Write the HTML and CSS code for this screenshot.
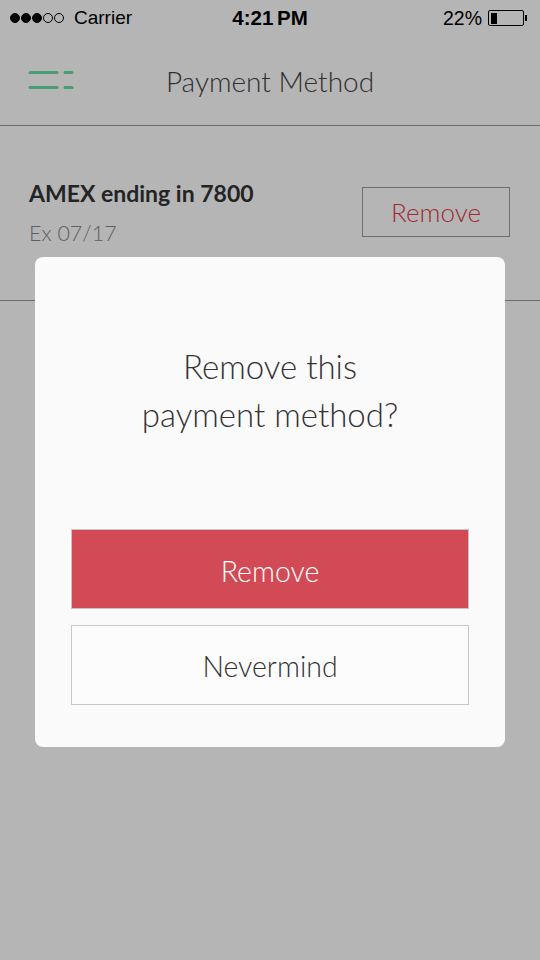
FILE: index.html
```html
<!DOCTYPE html>
<html>
<head>
<meta charset="utf-8">
<link rel="stylesheet" href="styles.css">
</head>
<body>
<div class="screen">
  <div class="status">
    <div class="status-left">
      <span class="signal"><i class="dot on"></i><i class="dot on"></i><i class="dot on"></i><i class="dot"></i><i class="dot"></i></span>
      <span>Carrier</span>
    </div>
    <div class="status-time">4:21<span class="thin"> </span>PM</div>
    <div class="status-right">
      <span>22%</span>
      <span class="battery"><span class="battery-fill"></span></span><span class="battery-nub"></span>
    </div>
  </div>
  <div class="navbar">
    <div class="menu-icon">
      <svg width="46" height="20" viewBox="0 0 46 20">
        <g stroke="#68dca2" stroke-width="3" stroke-linecap="round">
          <line x1="2" y1="2.5" x2="29" y2="2.5"/>
          <line x1="37" y1="2.5" x2="44" y2="2.5"/>
          <line x1="2" y1="17.5" x2="29" y2="17.5"/>
          <line x1="37" y1="17.5" x2="44" y2="17.5"/>
        </g>
      </svg>
    </div>
    <div class="nav-title">Payment Method</div>
  </div>
  <div class="card-row">
    <div class="card-info">
      <div class="card-name">AMEX ending in 7800</div>
      <div class="card-exp">Ex 07/17</div>
    </div>
    <button class="btn-outline-red">Remove</button>
  </div>
</div>
<div class="overlay">
  <div class="modal">
    <div class="modal-title">Remove this<br>payment method?</div>
    <div class="modal-actions">
      <button class="btn-danger">Remove</button>
      <button class="btn-plain">Nevermind</button>
    </div>
  </div>
</div>
</body>
</html>
```
FILE: styles.css
```css
* { box-sizing: border-box; }
html, body { margin: 0; padding: 0; }
body {
  width: 540px;
  height: 960px;
  background: #ffffff;
  font-family: Lato, "Open Sans", sans-serif;
  color: #444;
  overflow: hidden;
  position: relative;
}
.screen { height: 960px; }
.status {
  height: 36px;
  display: flex;
  align-items: center;
  justify-content: space-between;
  padding: 0 13px 0 10px;
  font-family: "Liberation Sans", Arial, sans-serif;
  color: #000;
  position: relative;
}
.status-left { font-size: 19px; display: flex; align-items: center; }
.signal { display: flex; gap: 1px; margin-right: 10px; }
.dot {
  width: 10px;
  height: 10px;
  border-radius: 50%;
  border: 1px solid #000;
  display: block;
}
.dot.on { background: #000; }
.status-time {
  position: absolute;
  left: 0; right: 0;
  text-align: center;
  font-weight: bold;
  font-size: 20.5px;
  pointer-events: none;
}
.thin { letter-spacing: -2px; }
.status-right { display: flex; align-items: center; font-size: 19.5px; }
.status-right span:first-child { margin-right: 6px; }
.battery {
  width: 36px;
  height: 16px;
  border: 1.5px solid #000;
  border-radius: 2px;
  padding: 1.5px;
  display: flex;
}
.battery-fill { width: 6px; background: #000; }
.battery-nub { width: 2px; height: 6px; background: #000; margin-left: 1px; }
.navbar {
  height: 90px;
  border-bottom: 1px solid #999;
  display: flex;
  align-items: center;
  position: relative;
}
.menu-icon { padding-left: 28px; display: flex; margin-top: -1px; }
.nav-title {
  position: absolute;
  left: 0; right: 0;
  text-align: center;
  font-size: 28px;
  font-weight: 300;
  color: #444;
}
.card-row {
  height: 175px;
  border-bottom: 1px solid #999;
  display: flex;
  align-items: flex-start;
  justify-content: space-between;
  padding: 52px 30px 0 29px;
}
.card-name { font-size: 23px; font-weight: 700; color: #333; line-height: 30px; }
.card-exp { font-size: 21.5px; font-weight: 300; color: #888; margin-top: 12px; line-height: 26px; }
.btn-outline-red {
  margin-top: 9px;
  width: 148px;
  height: 50px;
  background: transparent;
  border: 1px solid #999;
  color: #e43a4a;
  font-family: inherit;
  font-size: 26px;
  font-weight: 300;
  padding: 0;
}
.overlay {
  position: fixed;
  inset: 0;
  background: rgba(0, 0, 0, 0.29);
  display: flex;
  justify-content: center;
  align-items: flex-start;
}
.modal {
  margin-top: 257px;
  width: 470px;
  height: 490px;
  background: #fafafa;
  border-radius: 8px;
  padding: 85px 36px 0;
  display: flex;
  flex-direction: column;
}
.modal-title {
  text-align: center;
  font-size: 33px;
  line-height: 48px;
  font-weight: 300;
  color: #333;
}
.modal-actions {
  margin-top: 91px;
  display: flex;
  flex-direction: column;
  gap: 16px;
}
.btn-danger, .btn-plain {
  height: 80px;
  width: 100%;
  font-family: inherit;
  font-size: 28.5px;
  font-weight: 300;
  padding: 0;
}
.btn-danger {
  background: #d14a55;
  border: 1px solid #c4c4c4;
  color: #fff;
  padding-top: 3px;
}
.btn-plain {
  background: #fcfcfc;
  border: 1px solid #c8c8c8;
  color: #333;
  padding-top: 2px;
}
```
